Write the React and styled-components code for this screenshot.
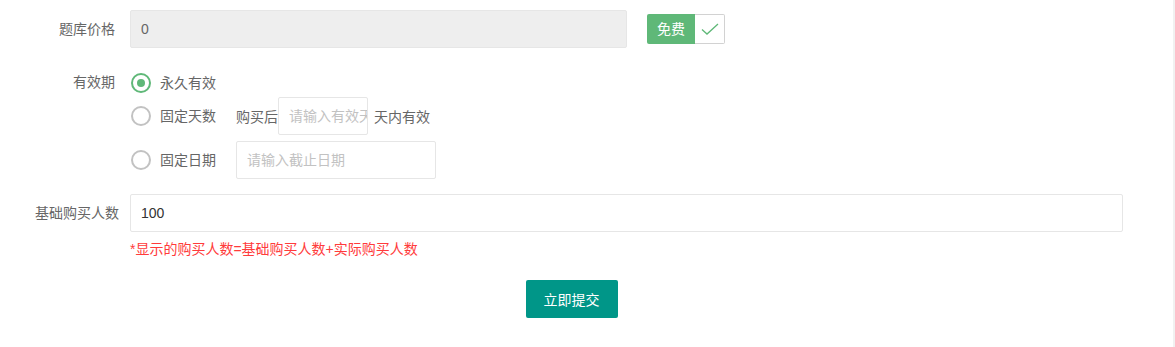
import React from 'react';
import styled, { createGlobalStyle } from 'styled-components';

const Global = createGlobalStyle`
  html, body {
    margin: 0;
    padding: 0;
    background: #fff;
  }
  body {
    font-family: "Liberation Sans", "Noto Sans CJK SC", sans-serif;
    font-size: 14px;
    color: #666;
  }
  * { box-sizing: border-box; }
`;

const Page = styled.div`
  width: 1175px;
  height: 347px;
  border-right: 2px solid #f1f1f1;
  overflow: hidden;
`;

const Form = styled.form`
  width: 1123px;
  padding: 10px 0 0 20px;
`;

const Item = styled.div`
  display: flex;
  align-items: flex-start;
  margin-bottom: ${p => (p.last ? 0 : 15)}px;
`;

const Label = styled.label`
  flex: 0 0 110px;
  width: 110px;
  padding: 9px 15px;
  line-height: 20px;
  text-align: right;
  white-space: nowrap;
  color: #666;
`;

const Block = styled.div`
  flex: 1;
  display: flex;
  flex-direction: ${p => (p.column ? 'column' : 'row')};
  align-items: ${p => (p.column ? 'stretch' : 'center')};
`;

const Input = styled.input`
  height: 38px;
  width: ${p => p.w || '100%'};
  padding: 0 ${p => (p.tight ? 0 : 10)}px 0 10px;
  border: 1px solid #e6e6e6;
  border-radius: 2px;
  background: ${p => (p.disabled ? '#eeeeee' : '#fff')};
  font-family: inherit;
  font-size: 14px;
  color: ${p => (p.disabled ? '#666' : '#333')};
  outline: none;
  &::placeholder { color: #c2c2c2; }
  &:disabled { opacity: 1; }
`;

const FreeCheck = styled.div`
  display: flex;
  height: 30px;
  margin-left: 20px;
`;

const FreeText = styled.span`
  width: 48px;
  background: #5fb878;
  color: #fff;
  line-height: 30px;
  text-align: center;
  border-radius: 2px 0 0 2px;
`;

const FreeIcon = styled.span`
  width: 30px;
  border: 1px solid #d2d2d2;
  border-left: none;
  border-radius: 0 2px 2px 0;
  display: flex;
  align-items: center;
  justify-content: center;
`;

const Option = styled.div`
  display: flex;
  align-items: center;
  height: ${p => p.h}px;
  margin-top: ${p => p.mt}px;
`;

const Radio = styled.span`
  width: 20px;
  height: 20px;
  margin-left: 1px;
  border-radius: 50%;
  border: 2px solid ${p => (p.checked ? '#5fb878' : '#c2c2c2')};
  display: flex;
  align-items: center;
  justify-content: center;
  &::after {
    content: '';
    display: ${p => (p.checked ? 'block' : 'none')};
    width: 8px;
    height: 8px;
    border-radius: 50%;
    background: #5fb878;
  }
`;

const RadioText = styled.span`
  margin-left: 9px;
  margin-right: 20px;
  color: #666;
  line-height: 20px;
`;

const Plain = styled.span`
  color: #666;
  margin-left: ${p => p.ml || 0}px;
`;

const Note = styled.div`
  margin-top: 7px;
  line-height: 20px;
  font-size: 14px;
  color: #ff3b3b;
`;

const Actions = styled.div`
  display: flex;
  justify-content: center;
  padding-top: 21px;
`;

const Submit = styled.button`
  height: 38px;
  padding: 0 18px;
  border: none;
  border-radius: 2px;
  background: #009688;
  color: #fff;
  font-family: inherit;
  font-size: 14px;
`;

export default function App() {
  return (
    <Page>
      <Global />
      <Form onSubmit={e => e.preventDefault()}>
        <Item>
          <Label>题库价格</Label>
          <Block>
            <Input disabled defaultValue="0" w="497px" />
            <FreeCheck>
              <FreeText>免费</FreeText>
              <FreeIcon>
                <svg width="18" height="14" viewBox="0 0 18 14">
                  <path d="M1 7.5 L6 12 L17 2" fill="none" stroke="#5fb878" strokeWidth="1.3" />
                </svg>
              </FreeIcon>
            </FreeCheck>
          </Block>
        </Item>

        <Item>
          <Label>有效期</Label>
          <Block column>
            <Option h={29} mt={5}>
              <Radio checked />
              <RadioText>永久有效</RadioText>
            </Option>
            <Option h={38} mt={0}>
              <Radio />
              <RadioText>固定天数</RadioText>
              <Plain>购买后</Plain>
              <Input w="90px" tight placeholder="请输入有效天数" />
              <Plain ml={6}>天内有效</Plain>
            </Option>
            <Option h={38} mt={6}>
              <Radio />
              <RadioText>固定日期</RadioText>
              <Input w="200px" placeholder="请输入截止日期" />
            </Option>
          </Block>
        </Item>

        <Item last>
          <Label>基础购买人数</Label>
          <Block column>
            <Input defaultValue="100" />
            <Note>*显示的购买人数=基础购买人数+实际购买人数</Note>
          </Block>
        </Item>

        <Actions>
          <Submit type="submit">立即提交</Submit>
        </Actions>
      </Form>
    </Page>
  );
}
